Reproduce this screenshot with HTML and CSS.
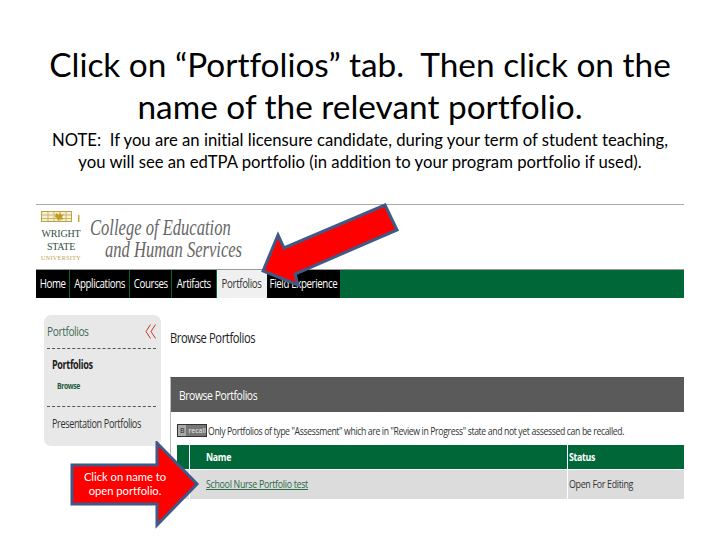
FILE: index.html
```html
<!DOCTYPE html>
<html lang="en">
<head>
  <meta charset="UTF-8" />
  <title>Click on Portfolios tab</title>
  <link rel="stylesheet" href="styles.css">
</head>
<body>
  <div class="slide">
    <h1>Click on “Portfolios” tab.&nbsp; Then click on the<br>name of the relevant portfolio.</h1>
    <p class="note">NOTE:&nbsp; If you are an initial licensure candidate, during your term of student teaching,<br>you will see an edTPA portfolio (in addition to your program portfolio if used).</p>

    <div class="shot">
      <div class="brand">
        <div class="logo">
          <svg class="emblem" width="40" height="13" viewBox="0 0 40 13">
            <rect x=".5" y="1.500" width="30" height="10" fill="#f6f0cf" stroke="#b9a24a" stroke-width="1"/>
            <path d="M1 5h29M1 8.500h29M7 2v9M13 2v9M19 2v9M25 2v9" stroke="#c9b670" stroke-width="1" fill="none"/>
            <path d="M15 3l3 2 1-3 1 3 3-1-2 3 1 3-3-1-2 2-1-3-2-1z" fill="#c29a1e"/>
            <rect x="37" y="5" width="1.500" height="7" fill="#c9a93c"/>
          </svg>
          <div class="wright">WRIGHT</div>
          <div class="wright">STATE</div>
          <div class="univ">UNIVERSITY</div>
        </div>
        <div class="college">
          <div>College of Education</div>
          <div class="indent">and Human Services</div>
        </div>
      </div>

      <nav class="tabs">
        <a class="tab t-home"><span>Home</span></a>
        <a class="tab t-apps"><span>Applications</span></a>
        <a class="tab t-courses"><span>Courses</span></a>
        <a class="tab t-artifacts"><span>Artifacts</span></a>
        <a class="tab t-portfolios active"><span>Portfolios</span></a>
        <a class="tab t-field"><span>Field Experience</span></a>
      </nav>

      <div class="content">
        <aside class="side">
          <div class="side-head"><span>Portfolios</span>
            <svg width="11" height="15" viewBox="0 0 11 15"><path d="M5.500 .5L1 7.500l4.500 7M10.500 .5L6 7.500l4.500 7" fill="none" stroke="#c0392b" stroke-width="1"/></svg>
          </div>
          <div class="side-bold"><span>Portfolios</span></div>
          <div class="side-link"><span>Browse</span></div>
          <div class="side-item"><span>Presentation Portfolios</span></div>
        </aside>

        <main class="main">
          <h2><span>Browse Portfolios</span></h2>
          <section class="panel">
            <div class="panel-head"><span>Browse Portfolios</span></div>
            <div class="recall-row">
              <span class="recall"><i>B</i><b>recall</b></span>
              <span class="recall-note">Only Portfolios of type "Assessment" which are in "Review in Progress" state and not yet assessed can be recalled.</span>
            </div>
            <div class="grid">
              <div class="cell-head"></div>
              <div class="cell-head"><span>Name</span></div>
              <div class="cell-head"><span>Status</span></div>
              <div class="cell"></div>
              <div class="cell"><a>School Nurse Portfolio test</a></div>
              <div class="cell"><span>Open For Editing</span></div>
            </div>
          </section>
        </main>
      </div>
    </div>

    <svg class="arrow-big" width="150" height="90" viewBox="0 0 150 90">
      <polygon points="5,71 20,35 26,48 127,5 139,30 37,74 40,85" fill="#f00" stroke="#3f5a86" stroke-width="3" stroke-linejoin="miter"/>
    </svg>

    <div class="callout">
      <svg width="132" height="90" viewBox="0 0 132 90">
        <polygon points="2,24 87,24 87,2 127,43 87,84 87,63 2,63" fill="#f00" stroke="#3f5a86" stroke-width="3"/>
      </svg>
      <div class="callout-text">Click on name to<br>open portfolio.</div>
    </div>
  </div>
</body>
</html>
```

FILE: styles.css
```css
html, body {
  margin: 0;
  padding: 0;
  background: #fff;
}
.slide {
  position: relative;
  width: 720px;
  height: 540px;
  overflow: hidden;
  font-family: Lato, sans-serif;
  font-variant-ligatures: none;
  color: #000;
}
h1 {
  margin: 0;
  padding-top: 43px;
  text-align: center;
  font-size: 33.400px;
  font-weight: 400;
  line-height: 42px;
  white-space: nowrap;
}
.note {
  margin: 2px 0 0;
  text-align: center;
  font-size: 16.700px;
  line-height: 22px;
  white-space: nowrap;
}
.shot {
  margin: 31px 36px 0;
  border-top: 1px solid #aaa;
  font-family: "Open Sans", sans-serif;
}
.brand {
  display: flex;
  height: 64px;
  border-bottom: 1px solid #999;
}
.logo {
  width: 54px;
  padding: 5px 0 0 5px;
  box-sizing: border-box;
  font-family: "Liberation Serif", serif;
  color: #33503f;
  text-align: center;
}
.emblem {
  display: block;
  margin-bottom: 4px;
}
.wright {
  width: 40px;
  font-size: 10px;
  line-height: 13px;
  letter-spacing: -.2px;
}
.univ {
  width: 40px;
  font-size: 6px;
  line-height: 11px;
  letter-spacing: .4px;
  color: #b9a24a;
}
.college {
  font-family: "Liberation Serif", serif;
  font-style: italic;
  font-size: 24px;
  line-height: 22px;
  color: #666;
  padding-top: 11px;
}
.college div {
  transform: scaleX(.69);
  transform-origin: left;
  white-space: nowrap;
}
.college .indent {
  margin-left: 15px;
}
.tabs {
  display: flex;
  height: 28px;
  background: #006838;
}
.tab {
  display: flex;
  justify-content: center;
  background: #000;
  color: #fff;
  font-size: 12.500px;
  letter-spacing: -.5px;
  line-height: 28px;
  margin-right: 1px;
  white-space: nowrap;
}
.tab span {
  display: inline-block;
  transform: scaleX(.78);
}
.t-home { width: 33px; }
.t-apps { width: 59px; }
.t-courses { width: 41px; }
.t-artifacts { width: 44px; }
.t-portfolios { width: 50px; margin-right: 0; }
.t-field { width: 73px; margin-right: 0; }
.tab.active {
  background: #f0f0f0;
  color: #333;
}
.content {
  display: flex;
  padding: 17px 0 0 8px;
}
.side {
  width: 117px;
  height: 131px;
  flex: none;
  background: #e8e8e8;
  border-radius: 7px;
  color: #333;
  font-size: 12px;
  letter-spacing: -.5px;
}
.side span {
  display: inline-block;
  transform-origin: left;
  transform: scaleX(.76);
  white-space: nowrap;
}
.side-head {
  display: flex;
  justify-content: space-between;
  align-items: center;
  margin: 0 5px 0 3px;
  height: 33px;
  border-bottom: 1px dashed #555;
  color: #3d6b55;
}
.side-head span {
  transform: scaleX(.85);
}
.side-bold {
  font-weight: 700;
  color: #222;
  padding: 8px 0 0 8px;
  line-height: 16px;
}
.side-link {
  font-size: 9px;
  font-weight: 700;
  color: #1f5c41;
  padding: 5px 0 0 13px;
  line-height: 16px;
}
.side-item {
  margin: 12px 5px 0 3px;
  padding: 8px 0 0 5px;
  border-top: 1px dashed #555;
  line-height: 18px;
}
.main {
  flex: 1;
  min-width: 0;
  margin-left: 9px;
}
h2 {
  margin: 0;
  padding-top: 14px;
  font-size: 14px;
  font-weight: 400;
  line-height: 18px;
  letter-spacing: -.5px;
  color: #222;
}
h2 span, .panel-head span, .recall-note, .cell-head span, .cell span, .cell a {
  display: inline-block;
  transform-origin: left;
  white-space: nowrap;
}
h2 span {
  transform: scaleX(.8);
}
.panel {
  margin-top: 30px;
  border-top: 1px solid #555;
  border-left: 1px solid #bbb;
}
.panel-head {
  background: #5a5a5a;
  color: #fff;
  height: 34px;
  line-height: 36px;
  padding-left: 8px;
  font-size: 12.500px;
  letter-spacing: -.5px;
}
.panel-head span {
  transform: scaleX(.83);
}
.recall-row {
  display: flex;
  align-items: center;
  gap: 1px;
  height: 33px;
  box-sizing: border-box;
  padding: 4px 0 0 6px;
  font-size: 10.500px;
  letter-spacing: -.45px;
  color: #333;
  white-space: nowrap;
}
.recall-note {
  transform: scaleX(.827);
}
.recall {
  display: flex;
  width: 30px;
  height: 13px;
  flex: none;
  background: #777;
  border: 1px solid #333;
  box-sizing: border-box;
  color: #eee;
  font-size: 7px;
  line-height: 11px;
  letter-spacing: 0;
}
.recall i {
  width: 11px;
  background: #aaa;
  color: #222;
  font-style: normal;
  text-align: center;
}
.recall b {
  font-weight: 400;
  padding-left: 2px;
}
.grid {
  display: grid;
  grid-template-columns: 12px 377px 1fr;
  margin-left: 6px;
  column-gap: 1px;
}
.cell-head {
  background: #006838;
  color: #fff;
  height: 24px;
  line-height: 24px;
  font-size: 11px;
  font-weight: 700;
  letter-spacing: -.4px;
  padding-left: 16px;
  margin-bottom: 1px;
}
.cell-head span {
  transform: scaleX(.8);
}
.cell-head:first-child, .cell:nth-child(4) {
  padding: 0;
}
.cell-head:nth-child(3), .cell:nth-child(6) {
  padding-left: 1px;
}
.cell {
  background: #dcdcdc;
  color: #333;
  height: 29px;
  line-height: 28px;
  font-size: 11.500px;
  letter-spacing: -.4px;
  padding-left: 16px;
}
.cell span, .cell a {
  transform: scaleX(.77);
}
.cell a {
  color: #2a6a4a;
  text-decoration: underline;
}
/* arrows sit on top of the screenshot */
.arrow-big {
  position: absolute;
  left: 258px;
  top: 200px;
}
.callout {
  position: absolute;
  left: 70px;
  top: 441px;
  width: 132px;
  height: 90px;
}
.callout svg {
  display: block;
}
.callout-text {
  position: absolute;
  left: 2px;
  top: 29px;
  width: 106px;
  text-align: center;
  color: #fff;
  font-family: Lato, sans-serif;
  font-size: 11.200px;
  line-height: 14px;
}
```
